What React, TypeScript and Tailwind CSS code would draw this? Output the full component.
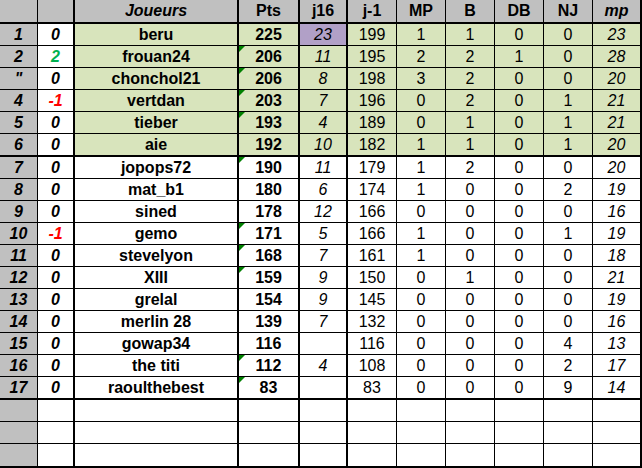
import React from "react";

type Row = {
  rank: string;
  diff: number;
  name: string;
  pts: number;
  flag: boolean;
  j16: string;
  prev: number;
  mp: number;
  b: number;
  db: number;
  nj: number;
  moy: number;
};

const rows: Row[] = [
  { rank: "1", diff: 0, name: "beru", pts: 225, flag: false, j16: "23", prev: 199, mp: 1, b: 1, db: 0, nj: 0, moy: 23 },
  { rank: "2", diff: 2, name: "frouan24", pts: 206, flag: true, j16: "11", prev: 195, mp: 2, b: 2, db: 1, nj: 0, moy: 28 },
  { rank: "\"", diff: 0, name: "chonchol21", pts: 206, flag: true, j16: "8", prev: 198, mp: 3, b: 2, db: 0, nj: 0, moy: 20 },
  { rank: "4", diff: -1, name: "vertdan", pts: 203, flag: true, j16: "7", prev: 196, mp: 0, b: 2, db: 0, nj: 1, moy: 21 },
  { rank: "5", diff: 0, name: "tieber", pts: 193, flag: true, j16: "4", prev: 189, mp: 0, b: 1, db: 0, nj: 1, moy: 21 },
  { rank: "6", diff: 0, name: "aie", pts: 192, flag: false, j16: "10", prev: 182, mp: 1, b: 1, db: 0, nj: 1, moy: 20 },
  { rank: "7", diff: 0, name: "jopops72", pts: 190, flag: true, j16: "11", prev: 179, mp: 1, b: 2, db: 0, nj: 0, moy: 20 },
  { rank: "8", diff: 0, name: "mat_b1", pts: 180, flag: false, j16: "6", prev: 174, mp: 1, b: 0, db: 0, nj: 2, moy: 19 },
  { rank: "9", diff: 0, name: "sined", pts: 178, flag: false, j16: "12", prev: 166, mp: 0, b: 0, db: 0, nj: 0, moy: 16 },
  { rank: "10", diff: -1, name: "gemo", pts: 171, flag: true, j16: "5", prev: 166, mp: 1, b: 0, db: 0, nj: 1, moy: 19 },
  { rank: "11", diff: 0, name: "stevelyon", pts: 168, flag: true, j16: "7", prev: 161, mp: 1, b: 0, db: 0, nj: 0, moy: 18 },
  { rank: "12", diff: 0, name: "XIII", pts: 159, flag: true, j16: "9", prev: 150, mp: 0, b: 1, db: 0, nj: 0, moy: 21 },
  { rank: "13", diff: 0, name: "grelal", pts: 154, flag: false, j16: "9", prev: 145, mp: 0, b: 0, db: 0, nj: 0, moy: 19 },
  { rank: "14", diff: 0, name: "merlin 28", pts: 139, flag: false, j16: "7", prev: 132, mp: 0, b: 0, db: 0, nj: 0, moy: 16 },
  { rank: "15", diff: 0, name: "gowap34", pts: 116, flag: false, j16: "", prev: 116, mp: 0, b: 0, db: 0, nj: 4, moy: 13 },
  { rank: "16", diff: 0, name: "the titi", pts: 112, flag: true, j16: "4", prev: 108, mp: 0, b: 0, db: 0, nj: 2, moy: 17 },
  { rank: "17", diff: 0, name: "raoulthebest", pts: 83, flag: true, j16: "", prev: 83, mp: 0, b: 0, db: 0, nj: 9, moy: 14 },
];

// widths include each cell's right border
const W = {
  rank: "w-[38px] border-r",
  diff: "w-[37px] border-r-2",
  name: "w-[164px] border-r-2",
  pts: "w-[61px] border-r-2",
  j16: "w-[48px] border-r-2",
  prev: "w-[49px] border-r",
  mp: "w-[49px] border-r",
  b: "w-[49px] border-r",
  db: "w-[49px] border-r",
  nj: "w-[49px] border-r",
  moy: "w-[49px] border-r-2",
};

const cell = "flex shrink-0 items-center justify-center border-black h-full";

function Flag() {
  return (
    <span className="absolute left-0 top-0 h-0 w-0 border-t-[6px] border-r-[6px] border-t-[#008000] border-r-transparent" />
  );
}

export default function App() {
  return (
    <div className="w-[642px] h-[468px] bg-white text-black font-['Liberation_Sans',Arial,sans-serif] text-[16px] leading-none overflow-hidden">
      {/* header */}
      <div className="flex h-[24px] border-b-2 border-black bg-[#c0c0c0] font-bold">
        <div className={`${cell} ${W.rank}`} />
        <div className={`${cell} ${W.diff}`} />
        <div className={`${cell} ${W.name} italic`}>Joueurs</div>
        <div className={`${cell} ${W.pts}`}>Pts</div>
        <div className={`${cell} ${W.j16}`}>j16</div>
        <div className={`${cell} ${W.prev}`}>j-1</div>
        <div className={`${cell} ${W.mp}`}>MP</div>
        <div className={`${cell} ${W.b}`}>B</div>
        <div className={`${cell} ${W.db}`}>DB</div>
        <div className={`${cell} ${W.nj}`}>NJ</div>
        <div className={`${cell} ${W.moy} italic`}>mp</div>
      </div>

      {rows.map((r, i) => {
        const top = i < 6;
        const thick = i === 5 || i === 16;
        const bg = top ? "bg-[#d8e4bc]" : "bg-white";
        const diffColor = r.diff > 0 ? "text-[#00b050]" : r.diff < 0 ? "text-[#ff0000]" : "text-black";
        return (
          <div
            key={r.name}
            className={`flex border-black ${thick ? "h-[23px] border-b-2" : "h-[22px] border-b"}`}
          >
            <div className={`${cell} ${W.rank} bg-[#c0c0c0] font-bold italic`}>{r.rank}</div>
            <div className={`${cell} ${W.diff} font-bold italic ${diffColor}`}>{r.diff}</div>
            <div className={`${cell} ${W.name} ${bg} font-bold`}>{r.name}</div>
            <div className={`${cell} ${W.pts} ${bg} relative font-bold`}>
              {r.flag && <Flag />}
              {r.pts}
            </div>
            <div className={`${cell} ${W.j16} ${i === 0 ? "bg-[#b1a0c7]" : bg} italic`}>{r.j16}</div>
            <div className={`${cell} ${W.prev} ${bg}`}>{r.prev}</div>
            <div className={`${cell} ${W.mp} ${bg}`}>{r.mp}</div>
            <div className={`${cell} ${W.b} ${bg}`}>{r.b}</div>
            <div className={`${cell} ${W.db} ${bg}`}>{r.db}</div>
            <div className={`${cell} ${W.nj} ${bg}`}>{r.nj}</div>
            <div className={`${cell} ${W.moy} ${bg} italic`}>{r.moy}</div>
          </div>
        );
      })}

      {[0, 1, 2].map((k) => (
        <div
          key={k}
          className={`flex border-black ${k === 2 ? "h-[24px] border-b-2" : "h-[22px] border-b"}`}
        >
          <div className={`${cell} ${W.rank} bg-[#c0c0c0]`} />
          <div className={`${cell} ${W.diff}`} />
          <div className={`${cell} ${W.name}`} />
          <div className={`${cell} ${W.pts}`} />
          <div className={`${cell} ${W.j16}`} />
          <div className={`${cell} ${W.prev}`} />
          <div className={`${cell} ${W.mp}`} />
          <div className={`${cell} ${W.b}`} />
          <div className={`${cell} ${W.db}`} />
          <div className={`${cell} ${W.nj}`} />
          <div className={`${cell} ${W.moy}`} />
        </div>
      ))}
    </div>
  );
}
